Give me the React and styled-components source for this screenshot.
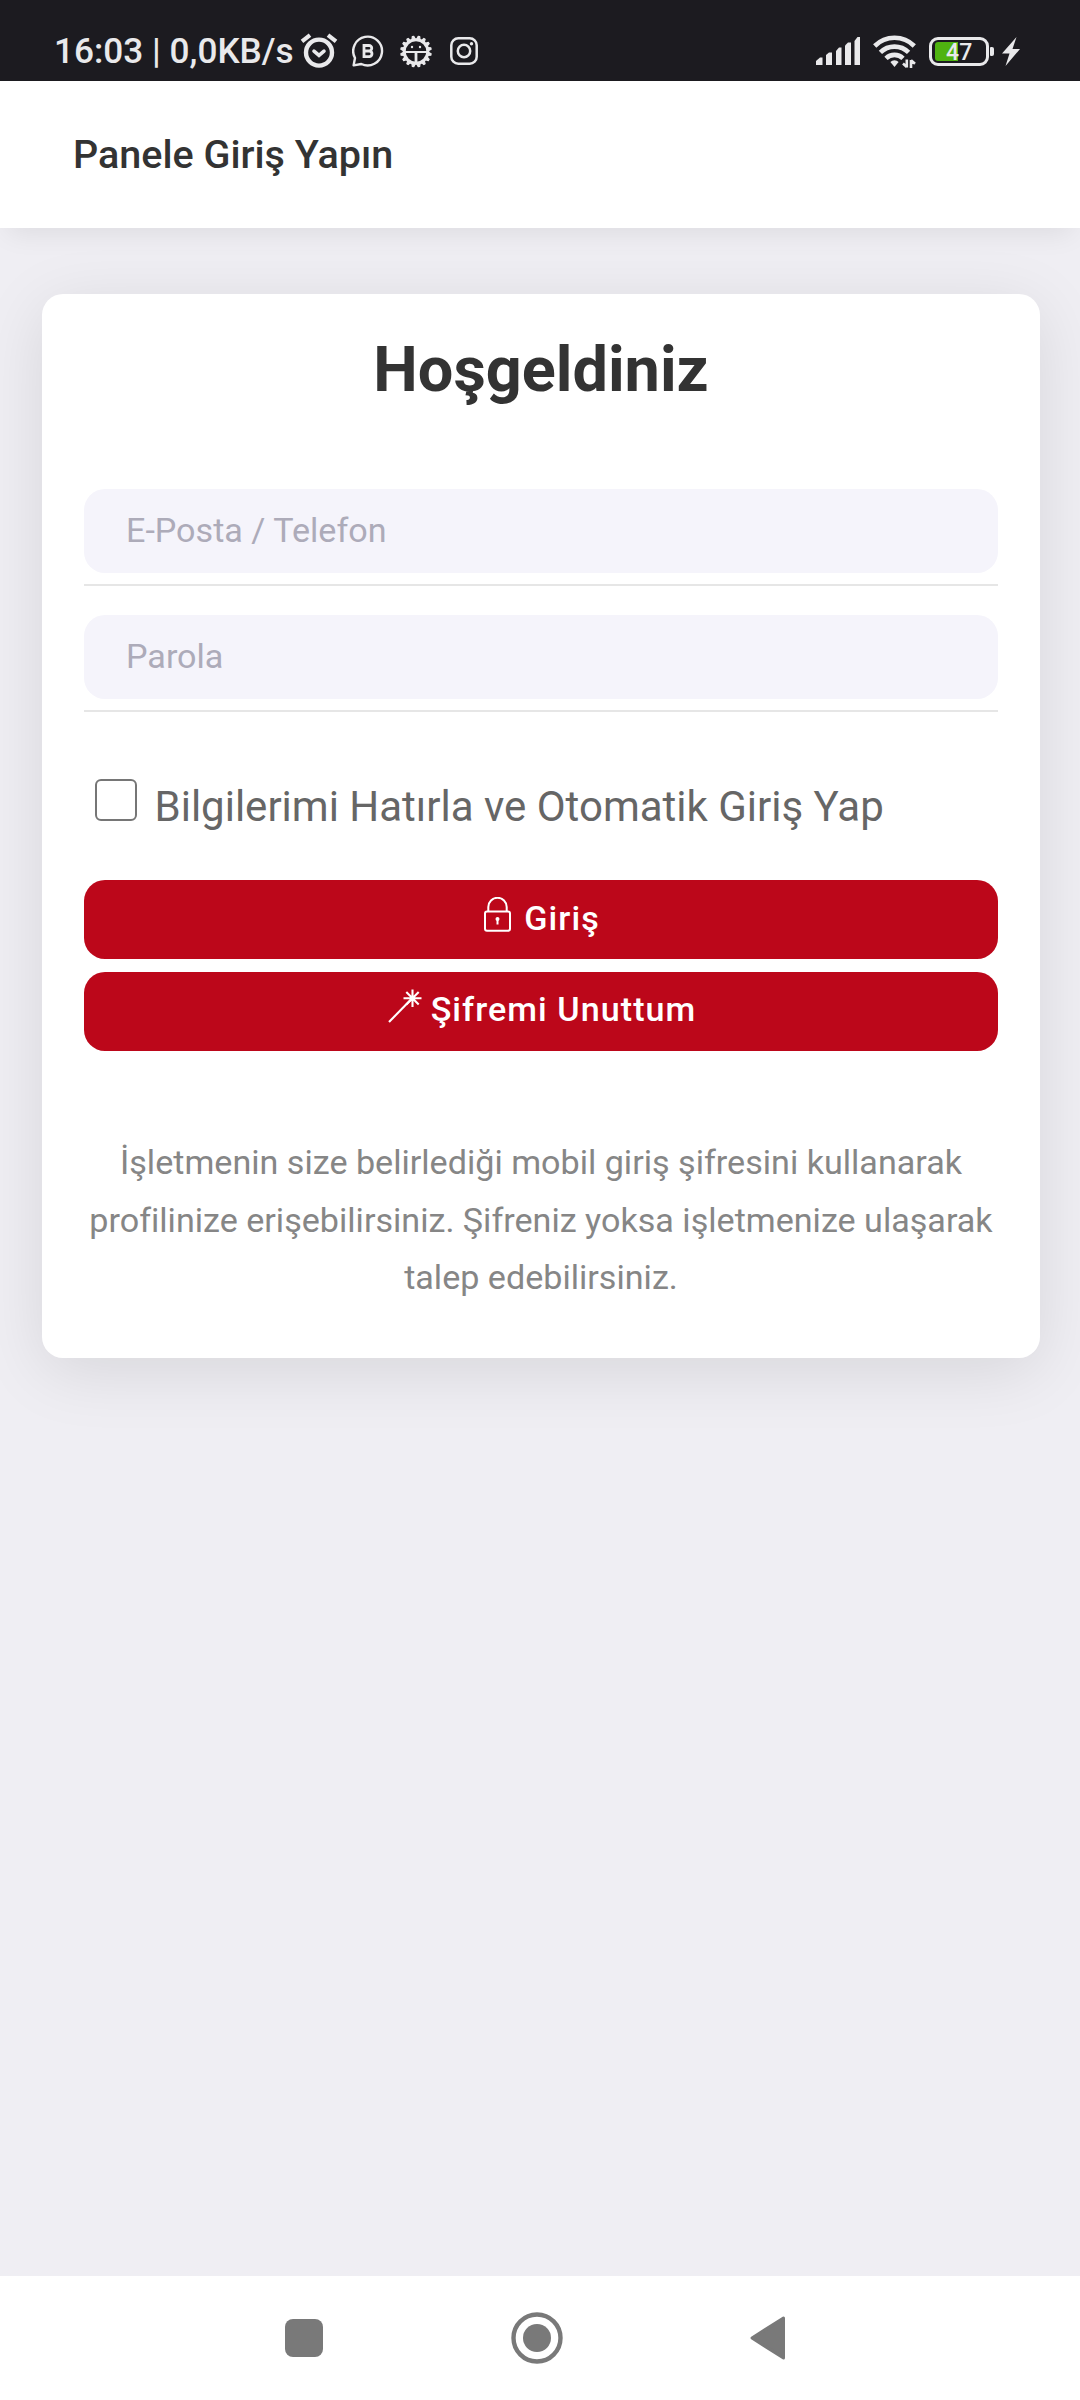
import React from 'react'
import { useState } from 'react'
import styled, { createGlobalStyle } from 'styled-components'

const GlobalStyle = createGlobalStyle`
    * {
        box-sizing: border-box;
    }

    body {
        margin: 0;
        background-color: #efeef3;
        font-family: Roboto, "Liberation Sans", sans-serif;
        font-variant-ligatures: none;
    }
`

const Page = styled.div`
    display: flex;
    flex-direction: column;
    width: 1080px;
    height: 2400px;
    background-color: #efeef3;
`

const StatusBar = styled.div`
    display: flex;
    align-items: flex-start;
    justify-content: space-between;
    height: 81px;
    padding: 31px 60px 0 54px;
    background-color: #1c1b20;
    color: #e9e9eb;
`

const StatusGroup = styled.div`
    display: flex;
    align-items: center;
    height: 40px;
    gap: ${props => props.$gap};
`

const Clock = styled.span`
    font-size: 35.2px;
    font-weight: 500;
    line-height: 40px;
    width: 246px;
    white-space: nowrap;
`

const Header = styled.header`
    display: flex;
    align-items: center;
    height: 147px;
    padding: 0 73px;
    background-color: white;
    box-shadow: 0 13px 26px -8px rgba(0, 0, 0, 0.08);
`

const HeaderTitle = styled.h1`
    margin: 0;
    font-size: 39.5px;
    font-weight: 500;
    line-height: 46px;
    color: #333333;
`

const Content = styled.main`
    flex: 1;
    padding: 66px 40px 0 42px;
`

const Card = styled.form`
    display: flex;
    flex-direction: column;
    height: 1064px;
    padding: 38px 42px 0;
    border-radius: 21px;
    background-color: white;
    box-shadow: 0 13px 66px rgba(0, 0, 0, 0.1);
`

const Title = styled.h2`
    margin: 0 0 81px;
    font-size: 63px;
    font-weight: 700;
    line-height: 76px;
    text-align: center;
    color: #333333;
`

const Field = styled.div`
    height: 97px;
    margin-bottom: 29px;
    border-bottom: 2px solid #e6e6e6;
`

const Input = styled.input`
    display: block;
    width: 100%;
    height: 84px;
    padding: 0 42px 2px;
    border: 0;
    outline: 0;
    border-radius: 21px;
    background-color: #f5f4fb;
    font-family: inherit;
    font-size: 34.125px;
    color: #333333;

    &::placeholder {
        color: #adabb9;
        opacity: 1;
    }
`

const Remember = styled.label`
    display: flex;
    align-items: center;
    height: 50px;
    margin: 39px 0 50px 11px;
    font-size: 42px;
    line-height: 50px;
    white-space: nowrap;
    color: #666666;
`

const RememberText = styled.span`
    padding-top: 3px;
`

const Checkbox = styled.input`
    appearance: none;
    width: 42px;
    height: 42px;
    margin: 0 17.5px 10px 0;
    border: 2.5px solid #767676;
    border-radius: 6px;
    background-color: white;

    &:checked {
        background-color: #bc071a;
    }
`

const Button = styled.button`
    display: flex;
    align-items: center;
    justify-content: center;
    height: 79px;
    margin-bottom: 13px;
    padding: 0 0 ${props => props.$lift} 2px;
    border: 0;
    border-radius: 21px;
    background-color: #bc071a;
    font-family: inherit;
    font-size: 34.125px;
    font-weight: 500;
    line-height: 40px;
    letter-spacing: 1.05px;
    color: white;
    cursor: pointer;

    & > svg {
        margin: 0 ${props => props.$gap} 7px 0;
    }
`

const Hint = styled.p`
    margin: 70px 0 0;
    font-size: 34.125px;
    line-height: 57.5px;
    text-align: center;
    white-space: nowrap;
    color: #868686;
`

const NavBar = styled.nav`
    display: flex;
    align-items: center;
    justify-content: space-between;
    height: 124px;
    padding: 0 294px 0 285px;
    background-color: white;
`

function AlarmIcon() {
    return (
        <svg width="38" height="36" viewBox="0 0 38 36" fill="none" stroke="currentColor" strokeLinecap="round">
            <circle cx="19" cy="19.6" r="13" strokeWidth="4.4" />
            <path d="M2 8.3 10 2.2M36 8.3 28 2.2" strokeWidth="4.2" strokeLinecap="butt" />
            <path d="M14 18.2 19 22.4 24 18.2" strokeWidth="3.6" />
        </svg>
    )
}

function BusinessIcon() {
    return (
        <svg width="32" height="32" viewBox="0 0 32 32" fill="none" stroke="currentColor">
            <path d="M1.6 30.4 3 23A14.4 14.4 0 1 1 9.3 29Z" strokeWidth="2.4" strokeLinejoin="round" />
            <path d="M12 10.5H17A2.7 2.7 0 0 1 17 16H12ZM12 16H17.6A2.9 2.9 0 0 1 17.6 21.7H12Z" strokeWidth="2.8" />
        </svg>
    )
}

function GearIcon() {
    const teeth = Array.from({ length: 16 }, (_, i) => i * 22.5 + 11.25)

    return (
        <svg width="32" height="33" viewBox="0 0 32 33" fill="none" stroke="currentColor">
            <circle cx="16" cy="16.5" r="11.8" strokeWidth="3" />
            {teeth.map((angle) => (
                <path
                    key={angle}
                    d="M14.3 4.2 15.2 1.2H16.8L17.7 4.2Z"
                    fill="currentColor"
                    strokeWidth="1.1"
                    strokeLinejoin="round"
                    transform={`rotate(${angle} 16 16.5)`}
                />
            ))}
            <path d="M5 17H27" strokeWidth="2" />
            <path d="M16 17V28" strokeWidth="2.8" />
            <circle cx="12" cy="12" r="1.2" fill="currentColor" stroke="none" />
            <circle cx="20" cy="12" r="1.2" fill="currentColor" stroke="none" />
        </svg>
    )
}

function InstagramIcon() {
    return (
        <svg width="28" height="28" viewBox="0 0 28 28" fill="none" stroke="currentColor" strokeWidth="2.5">
            <rect x="1.3" y="1.3" width="25.4" height="25.4" rx="7" />
            <circle cx="14" cy="14" r="6.2" />
            <circle cx="21.5" cy="6.7" r="1.7" fill="currentColor" stroke="none" />
        </svg>
    )
}

function SignalIcon() {
    return (
        <svg width="44" height="28" viewBox="0 0 44 28" fill="currentColor">
            <path d="M0 28V24L4 20.5H6.5V28Z" />
            <path d="M10 28V18L13 15.5H16V28Z" />
            <path d="M20 28V14L23 10.5H25.5V28Z" />
            <path d="M29 28V8.5L32 5.5H35V28Z" />
            <path d="M38.5 28V4L41.5 0H44V28Z" />
        </svg>
    )
}

function WifiIcon() {
    return (
        <svg width="43" height="33" viewBox="0 0 43 33" fill="none" stroke="currentColor" strokeWidth="4.6">
            <path d="M1.7 11A28 28 0 0 1 41.3 11" />
            <path d="M7.4 17.4A20 20 0 0 1 35.6 17.4" />
            <path d="M13 23.4A12 12 0 0 1 30 23.4" />
            <path d="M17.4 27A5.6 5.6 0 0 1 25.6 27L21.5 32Z" fill="currentColor" stroke="none" />
            <path d="M33.8 24.5V32.5M30 28.5 33.8 32M38 33V25M42 28.8 38 25.3" strokeWidth="2.6" />
        </svg>
    )
}

const Battery = styled.div`
    position: relative;
    width: 60px;
    height: 29px;
    padding: 2px 3px;
    border: 3px solid currentColor;
    border-radius: 9px;

    &::after {
        content: "";
        position: absolute;
        right: -8px;
        top: 7px;
        width: 4px;
        height: 9px;
        border-radius: 1px 2px 2px 1px;
        background-color: currentColor;
    }
`

const BatteryLevel = styled.div`
    height: 100%;
    border-radius: 3px 0 0 3px;
    background-color: #4fb310;
`

const BatteryText = styled.span`
    position: absolute;
    left: 14px;
    top: 2px;
    font-size: 23px;
    font-weight: 500;
    line-height: 22px;
    letter-spacing: 0.2px;
`

function BoltIcon() {
    return (
        <svg width="18" height="29" viewBox="0 0 18 29" fill="currentColor">
            <path d="M14.5 0 0 16.5H7.5L3.5 29 18 12H10.5Z" />
        </svg>
    )
}

function LockIcon() {
    return (
        <svg width="27" height="35" viewBox="0 0 27 35" fill="none" stroke="currentColor" strokeWidth="2">
            <rect x="1" y="14.6" width="25" height="19.2" rx="2" />
            <path d="M4.3 14.6V10A9.2 9.2 0 0 1 22.7 10V14.6" />
            <circle cx="13.5" cy="22" r="2" fill="currentColor" stroke="none" />
            <path d="M13.5 22V27.5" />
        </svg>
    )
}

function WandIcon() {
    return (
        <svg width="34" height="34" viewBox="0 0 34 34" fill="none" stroke="currentColor" strokeWidth="2.1">
            <path d="M1 33 24 9.5" />
            <path d="M24.5 0.5V18M15.5 9.2H33.5M18.3 3 30.7 15.4M30.7 3 18.3 15.4" />
        </svg>
    )
}

export default function App() {
    const [remember, setRemember] = useState(false)
    const level = 47

    function handleSubmit(event) {
        event.preventDefault()
    }

    return (
        <Page>
            <GlobalStyle />
            <StatusBar>
                <StatusGroup $gap="0">
                    <Clock>16:03 | 0,0KB/s</Clock>
                    <StatusGroup $gap="16px">
                        <StatusGroup $gap="14px">
                            <AlarmIcon />
                            <BusinessIcon />
                        </StatusGroup>
                        <StatusGroup $gap="18px">
                            <GearIcon />
                            <InstagramIcon />
                        </StatusGroup>
                    </StatusGroup>
                </StatusGroup>
                <StatusGroup $gap="13px">
                    <SignalIcon />
                    <WifiIcon />
                    <Battery>
                        <BatteryLevel style={{ width: `${level}%` }} />
                        <BatteryText>{level}</BatteryText>
                    </Battery>
                    <BoltIcon />
                </StatusGroup>
            </StatusBar>

            <Header>
                <HeaderTitle>Panele Giriş Yapın</HeaderTitle>
            </Header>

            <Content>
                <Card onSubmit={handleSubmit}>
                    <Title>Hoşgeldiniz</Title>
                    <Field>
                        <Input type="text" name="username" placeholder="E-Posta / Telefon" />
                    </Field>
                    <Field>
                        <Input type="password" name="password" placeholder="Parola" />
                    </Field>

                    <Remember>
                        <Checkbox
                            type="checkbox"
                            checked={remember}
                            onChange={() => setRemember(!remember)}
                        />
                        <RememberText>Bilgilerimi Hatırla ve Otomatik Giriş Yap</RememberText>
                    </Remember>

                    <Button type="submit" $gap="13px" $lift="3px">
                        <LockIcon />
                        Giriş
                    </Button>
                    <Button type="button" $gap="9px" $lift="5px">
                        <WandIcon />
                        Şifremi Unuttum
                    </Button>

                    <Hint>
                        İşletmenin size belirlediği mobil giriş şifresini kullanarak<br />
                        profilinize erişebilirsiniz. Şifreniz yoksa işletmenize ulaşarak<br />
                        talep edebilirsiniz.
                    </Hint>
                </Card>
            </Content>

            <NavBar>
                <svg width="38" height="38" viewBox="0 0 38 38" fill="#797979">
                    <rect width="38" height="38" rx="8" />
                </svg>
                <svg width="52" height="52" viewBox="0 0 52 52" fill="#797979">
                    <circle cx="26" cy="26" r="23.5" fill="none" stroke="#797979" strokeWidth="4.4" />
                    <circle cx="26" cy="26" r="14" />
                </svg>
                <svg width="36" height="44" viewBox="0 0 36 44" fill="#797979" stroke="#797979">
                    <path d="M2 22 33.5 2V42Z" strokeWidth="3" strokeLinejoin="round" />
                </svg>
            </NavBar>
        </Page>
    )
}
